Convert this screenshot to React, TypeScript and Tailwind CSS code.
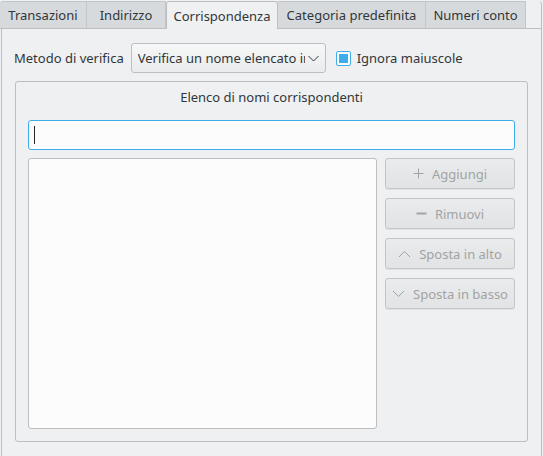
import React from 'react';

const tabs = [
  { label: 'Transazioni', w: 'w-[87px]' },
  { label: 'Indirizzo', w: 'w-[79px]' },
  { label: 'Corrispondenza', w: 'w-[112px]', active: true },
  { label: 'Categoria predefinita', w: 'w-[148px]' },
  { label: 'Numeri conto', w: 'w-[100px]' },
];

const PlusIcon = () => (
  <svg width="11" height="11" viewBox="0 0 11 11" className="text-[#a1a3a5]">
    <path d="M5.5 0.5v10M0.5 5.5h10" stroke="currentColor" strokeWidth="1" fill="none" />
  </svg>
);

const MinusIcon = () => (
  <svg width="11" height="11" viewBox="0 0 11 11" className="text-[#a1a3a5]">
    <path d="M0.5 5.5h10" stroke="currentColor" strokeWidth="2" fill="none" />
  </svg>
);

const UpIcon = () => (
  <svg width="13" height="8" viewBox="0 0 13 8" className="text-[#a1a3a5]">
    <path d="M1 7l5.5-5.5L12 7" stroke="currentColor" strokeWidth="1" fill="none" />
  </svg>
);

const DownIcon = () => (
  <svg width="13" height="8" viewBox="0 0 13 8" className="text-[#a1a3a5]">
    <path d="M1 1l5.5 5.5L12 1" stroke="currentColor" strokeWidth="1" fill="none" />
  </svg>
);

const SideButton: React.FC<{ icon: React.ReactNode; label: string }> = ({ icon, label }) => (
  <button
    disabled
    className="flex h-[31px] w-[130px] items-center justify-center gap-[8px] rounded-[3px] border border-[#c3c5c7] bg-gradient-to-b from-[#eaebec] to-[#e1e3e4] text-[#a1a3a5] shadow-[0_1px_0_rgba(0,0,0,0.06)]"
  >
    {icon}
    <span>{label}</span>
  </button>
);

export default function App() {
  return (
    <div
      className="h-[456px] w-[543px] overflow-hidden bg-[#eff0f1] text-[13px] leading-[18px] text-[#31363b]"
      style={{ fontFamily: '"Noto Sans", "DejaVu Sans", sans-serif' }}
    >
      {/* Tab bar */}
      <div className="flex h-[29px] items-stretch pt-[1px]">
        {tabs.map((t) =>
          t.active ? (
            <div
              key={t.label}
              className={`${t.w} flex items-center justify-center rounded-t-[3px] border-x border-t border-[#bcbebf] bg-[#eff0f1]`}
            >
              {t.label}
            </div>
          ) : (
            <div
              key={t.label}
              className={`${t.w} flex items-center justify-center border-r border-t border-b border-[#c3c6c8] border-b-[#bcbebf] bg-[#d7dadc] first:rounded-tl-[3px] last:rounded-tr-[3px]`}
            >
              {t.label}
            </div>
          )
        )}
        <div className="w-[16px] rounded-tr-[3px] border-r border-b border-[#bcbebf]" />
      </div>

      {/* Panel */}
      <div className="ml-[1px] h-[427px] w-[541px] border-x border-[#bcbebf] bg-[#eff0f1] px-[13px] pt-[14px]">
        {/* Method row */}
        <div className="flex h-[30px] items-center">
          <span className="-ml-[1px]">Metodo di verifica</span>
          <div className="ml-[7px] flex h-[30px] w-[195px] items-center rounded-[3px] border border-[#bcbebf] bg-gradient-to-b from-[#f6f7f7] to-[#eaebec] pl-[6px] pr-[6px]">
            <span className="w-[167px] overflow-hidden whitespace-nowrap">Verifica un nome elencato in</span>
            <svg width="11" height="7" viewBox="0 0 11 7" className="ml-[3px]">
              <path d="M0.5 1l5 5 5-5" stroke="#31363b" strokeWidth="1" fill="none" />
            </svg>
          </div>
          <div className="ml-[10px] flex h-[15px] w-[15px] items-center justify-center rounded-[2px] border border-[#3daee9] bg-[#fcfcfc]">
            <div className="h-[9px] w-[9px] bg-[#3daee9]" />
          </div>
          <span className="ml-[6px]">Ignora maiuscole</span>
        </div>

        {/* Group box */}
        <div className="mt-[8px] flex h-[361px] flex-col rounded-[3px] border border-[#bcbebf] px-[12px] pt-[6px]">
          <div className="text-center">Elenco di nomi corrispondenti</div>
          <div className="mt-[14px] flex h-[30px] items-center rounded-[3px] border border-[#3daee9] bg-[#fcfcfc] pl-[5px]">
            <div className="h-[18px] w-[1px] bg-[#232629]" />
          </div>
          <div className="mt-[8px] flex gap-[8px]">
            <div className="h-[271px] w-[350px] rounded-[3px] border border-[#bcbebf] bg-[#fcfcfc]" />
            <div className="flex flex-col gap-[9px]">
              <SideButton icon={<PlusIcon />} label="Aggiungi" />
              <SideButton icon={<MinusIcon />} label="Rimuovi" />
              <SideButton icon={<UpIcon />} label="Sposta in alto" />
              <SideButton icon={<DownIcon />} label="Sposta in basso" />
            </div>
          </div>
        </div>
      </div>
    </div>
  );
}
